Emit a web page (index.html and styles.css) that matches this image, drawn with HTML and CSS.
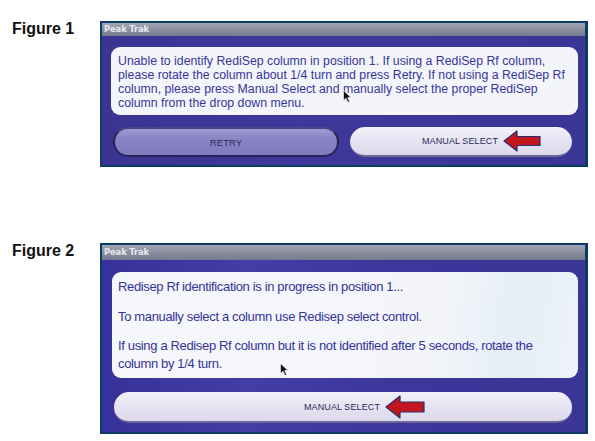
FILE: index.html
```html
<!DOCTYPE html>
<html>
<head>
<meta charset="utf-8">
<link rel="stylesheet" href="styles.css">
</head>
<body>
<div class="page">
  <section class="figure fig1">
    <div class="label">Figure 1</div>
    <div class="frame">
      <div class="titlebar">Peak Trak</div>
      <div class="screen">
        <div class="msg msg1">
          Unable to identify RediSep column in position 1. If using a RediSep Rf column,<br>
          please rotate the column about 1/4 turn and press Retry. If not using a RediSep Rf<br>
          column, please press Manual Select and manually select the proper RediSep<br>
          column from the drop down menu.
        </div>
        <div class="buttons">
          <div class="btn btn-dark">RETRY</div>
          <div class="btn btn-light"><span class="btn-label">MANUAL SELECT</span>
            <svg class="arrow" width="38" height="22" viewBox="0 0 38 22"><path d="M1 11 L14 1 L14 6.5 L37 6.5 L37 15.5 L14 15.5 L14 21 Z" fill="#c3161f" stroke="#23306e" stroke-width="1.2" stroke-linejoin="round"/></svg>
          </div>
        </div>
        <svg class="cursor cursor1" width="9" height="13" viewBox="0 0 9 13"><path d="M0.5 0.5 L0.5 10.5 L3 8.2 L5 12.5 L6.6 11.7 L4.7 7.6 L8 7.6 Z" fill="#111" stroke="#fff" stroke-width="0.6"/></svg>
      </div>
    </div>
  </section>
  <section class="figure fig2">
    <div class="label">Figure 2</div>
    <div class="frame">
      <div class="titlebar">Peak Trak</div>
      <div class="screen screen2">
        <div class="msg msg2">
          <p>Redisep Rf identification is in progress in position 1...</p>
          <p>To manually select a column use Redisep select control.</p>
          <p>If using a Redisep Rf column but it is not identified after 5 seconds, rotate the<br>column by 1/4 turn.</p>
        </div>
        <div class="buttons">
          <div class="btn btn-light btn-wide"><span class="btn-label">MANUAL SELECT</span>
            <svg class="arrow" width="40" height="24" viewBox="0 0 40 24"><path d="M1 12 L15 1 L15 7 L39 7 L39 17 L15 17 L15 23 Z" fill="#c3161f" stroke="#23306e" stroke-width="1.2" stroke-linejoin="round"/></svg>
          </div>
        </div>
        <svg class="cursor cursor2" width="9" height="13" viewBox="0 0 9 13"><path d="M0.5 0.5 L0.5 10.5 L3 8.2 L5 12.5 L6.6 11.7 L4.7 7.6 L8 7.6 Z" fill="#111" stroke="#fff" stroke-width="0.6"/></svg>
      </div>
    </div>
  </section>
</div>
</body>
</html>
```
FILE: styles.css
```css
html, body {
  margin: 0;
  padding: 0;
  background: #ffffff;
}
.page {
  width: 595px;
  height: 441px;
  display: flex;
  flex-direction: column;
  padding-top: 21px;
  box-sizing: border-box;
}
.figure {
  display: flex;
  align-items: flex-start;
}
.fig2 {
  margin-top: 76px;
}
.label {
  width: 100px;
  box-sizing: border-box;
  padding-left: 12px;
  font-family: "Liberation Sans", Arial, sans-serif;
  font-weight: bold;
  font-size: 16px;
  line-height: 16px;
  color: #111;
  padding-top: 0px;
}
.frame {
  width: 488px;
  box-sizing: border-box;
  flex: none;
  border: 2px solid #0e3a68;
  border-right-width: 3px;
  background: #0e3a68;
}
.titlebar {
  height: 13px;
  background: linear-gradient(#a3a6b3, #878a9b 60%, #767a8d);
  color: #e8e9f0;
  font-family: "DejaVu Sans", sans-serif;
  font-weight: bold;
  font-size: 8.5px;
  line-height: 13px;
  padding-left: 2px;
  letter-spacing: -0.2px;
}
.fig2 .titlebar {
  height: 15px;
  line-height: 14px;
}
.screen {
  position: relative;
  background: linear-gradient(90deg, #3a3492 0%, #3e389c 40%, #3b3596 100%);
  padding: 11px 7px 8px 9px;
  display: flex;
  flex-direction: column;
  gap: 12px;
}
.screen2 {
  padding: 12px 7px 9px 10px;
  gap: 14px;
  background: linear-gradient(90deg, #37329a 0%, #433ea6 30%, #3d379c 60%, #3a3596 100%);
}
.msg {
  background: #f4f5fa;
  border-radius: 9px;
  color: #36359a;
  font-family: "Liberation Sans", Arial, sans-serif;
}
.msg1 {
  height: 68px;
  box-sizing: border-box;
  padding: 7px 0 0 7px;
  font-size: 12.3px;
  line-height: 14px;
  white-space: nowrap;
}
.msg2 {
  height: 106px;
  box-sizing: border-box;
  padding: 6px 0 0 6px;
  font-size: 13px;
  line-height: 18px;
  white-space: nowrap;
  letter-spacing: -0.35px;
  background: linear-gradient(100deg, #f6f7fb 0%, #f3f5fa 70%, #e4eef6 85%, #eef3f9 100%);
  color: #333399;
}
.msg2 p {
  margin: 0 0 11.5px 0;
}
.buttons {
  display: flex;
  gap: 11px;
  padding: 0 6px 0 2px;
}
.btn {
  flex: 1 1 0;
  min-width: 0;
  height: 30px;
  box-sizing: border-box;
  border-radius: 15px;
  display: flex;
  align-items: center;
  justify-content: center;
  font-family: "Liberation Sans", Arial, sans-serif;
  font-size: 9px;
  color: #2a2a5c;
  letter-spacing: 0.1px;
}
.btn-dark {
  background: linear-gradient(#9e9bd4, #8783c4 40%, #7f7bbd);
  border: 2px solid #2a2456;
  border-top-color: #4a4580;
  font-size: 9.5px;
}
.btn-light {
  background: linear-gradient(#f2f0f8, #e6e4f2 50%, #dcd9ec);
  border-bottom: 2px solid #6c6896;
  justify-content: flex-start;
  gap: 5px;
}
.btn-label {
  margin-left: 72px;
}
.btn-wide {
  height: 31px;
}
.btn-wide .btn-label {
  margin-left: 190px;
}
.arrow {
  display: block;
}
.cursor {
  position: absolute;
}
.cursor1 {
  left: 241px;
  top: 54px;
}
.cursor2 {
  left: 178px;
  top: 103px;
}
```
